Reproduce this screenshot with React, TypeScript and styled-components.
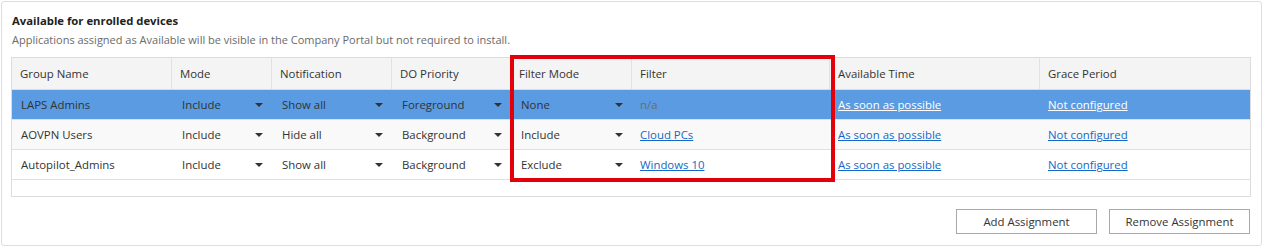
import React from "react";
import styled, { createGlobalStyle } from "styled-components";

const GlobalStyle = createGlobalStyle`
  body {
    margin: 0;
    background: #ffffff;
    font-family: "Open Sans", "Noto Sans", sans-serif;
  }
`;

interface Assignment {
  group: string;
  mode: string;
  notification: string;
  priority: string;
  filterMode: string;
  filter?: string;
}

const columns = [
  "Group Name",
  "Mode",
  "Notification",
  "DO Priority",
  "Filter Mode",
  "Filter",
  "Available Time",
  "Grace Period",
];

const rows: Assignment[] = [
  { group: "LAPS Admins", mode: "Include", notification: "Show all", priority: "Foreground", filterMode: "None" },
  { group: "AOVPN Users", mode: "Include", notification: "Hide all", priority: "Background", filterMode: "Include", filter: "Cloud PCs" },
  { group: "Autopilot_Admins", mode: "Include", notification: "Show all", priority: "Background", filterMode: "Exclude", filter: "Windows 10" },
];

const Select: React.FC<{ value: string }> = ({ value }) => (
  <SelectCell>
    <span>{value}</span>
    <Caret />
  </SelectCell>
);

const App: React.FC = () => {
  return (
    <>
      <GlobalStyle />
      <Panel>
        <Title>Available for enrolled devices</Title>
        <Subtitle>
          Applications assigned as Available will be visible in the Company Portal but not required to install.
        </Subtitle>

        <Table>
          <HeaderRow>
            {columns.map((c) => (
              <HeaderCell key={c}>{c}</HeaderCell>
            ))}
          </HeaderRow>

          {rows.map((r, i) => (
            <Row key={r.group} $selected={i === 0} $alt={i % 2 === 1}>
              <Cell>{r.group}</Cell>
              <Select value={r.mode} />
              <Select value={r.notification} />
              <Select value={r.priority} />
              <Select value={r.filterMode} />
              <Cell>
                {r.filter ? <Link $light={false}>{r.filter}</Link> : <Muted>n/a</Muted>}
              </Cell>
              <Cell>
                <Link $light={i === 0}>As soon as possible</Link>
              </Cell>
              <Cell>
                <Link $light={i === 0}>Not configured</Link>
              </Cell>
            </Row>
          ))}
          <Filler />
        </Table>

        <Actions>
          <Button>Add Assignment</Button>
          <Button>Remove Assignment</Button>
        </Actions>

        {/* annotation drawn over the filter columns */}
        <Highlight />
      </Panel>
    </>
  );
};

export default App;

// Styles
const gridColumns = "160px 100px 120px 119px 121px 198px 210px 210px";

const Panel = styled.section`
  position: relative;
  box-sizing: border-box;
  width: 1261px;
  height: 245px;
  margin: 1px 0 0 1px;
  padding: 9px 10px 0 9px;
  border: 1px solid #dedede;
  border-radius: 3px;
  color: #333333;
`;

const Title = styled.h2`
  margin: 0 0 0 1px;
  font-size: 11.3px;
  font-weight: 700;
  line-height: 20px;
  color: #222222;
`;

const Subtitle = styled.p`
  margin: 0 0 8px 1px;
  font-size: 11px;
  line-height: 18px;
  color: #6a6a6a;
`;

const Table = styled.div`
  box-sizing: border-box;
  width: 1240px;
  height: 140px;
  border: 1px solid #dcdcdc;
  font-size: 11.4px;
`;

const HeaderRow = styled.div`
  display: grid;
  grid-template-columns: ${gridColumns};
  height: 32px;
  box-sizing: border-box;
  background: #f4f4f4;
  border-bottom: 1px solid #dcdcdc;
`;

const HeaderCell = styled.div`
  display: flex;
  align-items: center;
  padding-left: 8px;
  border-right: 1px solid #e2e2e2;
  color: #333333;

  &:last-child {
    border-right: none;
  }
`;

const Row = styled.div<{ $selected: boolean; $alt: boolean }>`
  display: grid;
  grid-template-columns: ${gridColumns};
  height: 30px;
  box-sizing: border-box;
  border-bottom: 1px solid #e0e0e0;
  background: ${(p) => (p.$selected ? "#5a9be2" : p.$alt ? "#f9f9f9" : "#ffffff")};
`;

const Cell = styled.div`
  display: flex;
  align-items: center;
  padding-left: 8px;
  color: #333333;
  white-space: nowrap;

  &:first-child {
    padding-left: 9px;
  }
`;

const SelectCell = styled(Cell)`
  justify-content: space-between;
  padding-left: 10px;
  padding-right: 9px;
`;

const Caret = styled.span`
  width: 0;
  height: 0;
  border-left: 4px solid transparent;
  border-right: 4px solid transparent;
  border-top: 4px solid #333333;
`;

const Link = styled.a<{ $light: boolean }>`
  color: ${(p) => (p.$light ? "#ffffff" : "#1468c8")};
  text-decoration: underline;
  cursor: pointer;
`;

const Muted = styled.span`
  color: #6b6b6b;
`;

const Filler = styled.div`
  height: 16px;
`;

const Actions = styled.div`
  display: flex;
  justify-content: flex-end;
  gap: 12px;
  width: 1239px;
  margin-top: 12px;
`;

const Button = styled.button`
  box-sizing: border-box;
  width: 141px;
  height: 25px;
  padding: 0;
  background: #ffffff;
  border: 1px solid #a8a8a8;
  font-family: inherit;
  font-size: 11.4px;
  color: #333333;
  cursor: pointer;
`;

const Highlight = styled.div`
  position: absolute;
  left: 508px;
  top: 53px;
  width: 325px;
  height: 127px;
  box-sizing: border-box;
  border: 4px solid #e2000b;
  pointer-events: none;
`;
